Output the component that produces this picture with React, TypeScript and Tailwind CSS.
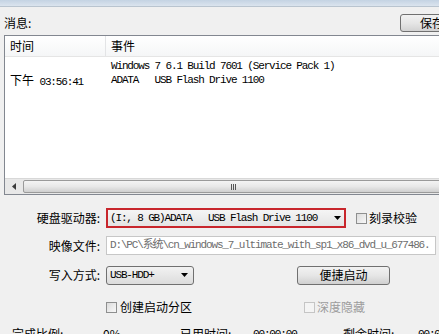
const cn = { fontFamily: '"Noto Sans CJK SC", "Liberation Sans", sans-serif' }
const mono = { fontFamily: '"Liberation Mono", "Noto Sans CJK SC", monospace' }

function Arrow() {
  return (
    <svg width="7" height="4" viewBox="0 0 7 4" className="shrink-0">
      <path d="M0 0h7L3.5 4z" fill="#000" />
    </svg>
  )
}

function Check({ disabled }: { disabled?: boolean }) {
  return (
    <span
      className={
        'inline-block w-[11px] h-[11px] border shrink-0 ' +
        (disabled
          ? 'border-[#c5c5c5] bg-[#f4f4f4]'
          : 'border-[#8e8f8f] bg-gradient-to-br from-[#dcdcdc] to-[#f8f8f8]')
      }
    />
  )
}

export default function App() {
  return (
    <div className="w-[439px] h-[334px] overflow-hidden bg-[#f0f0f0] text-[12px] text-black" style={cn}>
      <div className="w-[520px]">
        {/* title strip */}
        <div className="h-[7px] bg-gradient-to-b from-[#c4d3e3] to-[#dbe4ee] border-b border-[#b9c4cf]" />

        {/* 消息 + 保存 */}
        <div className="flex items-center h-[18px] mt-[7px]">
          <span className="ml-[4px] leading-none">消息:</span>
          <button className="ml-auto mr-[40px] w-[80px] h-[18px] border border-[#707070] rounded-[3px] bg-gradient-to-b from-[#f2f2f2] via-[#e6e6e6] to-[#d2d2d2] text-left pl-[19px] leading-none">
            保存
          </button>
        </div>

        {/* list */}
        <div className="mt-[3px] ml-[4px] h-[160px] border border-[#828790] bg-white flex flex-col">
          <div className="h-[21px] flex border-b border-[#e5e5e5] bg-gradient-to-b from-white to-[#f5f6f7] shrink-0">
            <div className="w-[101px] pl-[5px] flex items-center border-r border-[#e3e4e6]">时间</div>
            <div className="pl-[5px] flex items-center">事件</div>
          </div>
          <div className="flex-1 pt-[2px] text-[11px] tracking-[-1.15px] leading-[14px]" style={mono}>
            <div className="flex">
              <div className="w-[101px]" />
              <div className="pl-[5px] whitespace-pre">Windows 7 6.1 Build 7601 (Service Pack 1)</div>
            </div>
            <div className="flex">
              <div className="w-[101px] pl-[5px] whitespace-pre">
                <span className="text-[12px] tracking-normal" style={cn}>下午</span> 03:56:41
              </div>
              <div className="pl-[5px] whitespace-pre">ADATA   USB Flash Drive 1100</div>
            </div>
          </div>
          {/* horizontal scrollbar */}
          <div className="h-[16px] flex bg-[#e8e8e8] border-t border-[#d8d8d8] shrink-0">
            <div className="w-[18px] flex items-center justify-center">
              <svg width="4" height="7" viewBox="0 0 4 7">
                <path d="M4 0v7L0 3.5z" fill="#3c3c3c" />
              </svg>
            </div>
            <div className="flex-1 my-[1px] border border-[#9a9a9a] rounded-[2px] bg-gradient-to-b from-[#f4f4f4] via-[#e8e8e8] to-[#cfcfcf] flex items-center">
              <div className="ml-[207px] flex gap-[1px]">
                <span className="w-[1px] h-[6px] bg-[#555]" />
                <span className="w-[1px] h-[6px] bg-[#555]" />
                <span className="w-[1px] h-[6px] bg-[#555]" />
              </div>
            </div>
          </div>
        </div>

        {/* form */}
        <div className="mt-[13px] flex flex-col">
          <div className="flex items-center h-[20px] gap-[6px]">
            <div className="w-[100px] text-right">硬盘驱动器:</div>
            <div className="w-[240px] h-[20px] border-2 border-[#c8262c] bg-gradient-to-b from-[#f5f5f5] to-[#e4e4e4] flex items-center pl-[2px] pr-[3px]">
              <span className="flex-1 whitespace-pre text-[11px] tracking-[-1.15px]" style={mono}>(I:, 8 GB)ADATA   USB Flash Drive 1100</span>
              <Arrow />
            </div>
            <div className="flex items-center gap-[2px] ml-[4px]">
              <Check />
              <span>刻录校验</span>
            </div>
          </div>

          <div className="flex items-center h-[19px] gap-[6px] mt-[8px]">
            <div className="w-[100px] text-right">映像文件:</div>
            <div className="w-[330px] h-[19px] border border-[#c7c7c7] bg-white flex items-center pl-[3px] overflow-hidden">
              <span className="whitespace-pre text-[11px] tracking-[-1.15px] text-[#6d6d6d]" style={mono}>
                D:\PC\系统\cn_windows_7_ultimate_with_sp1_x86_dvd_u_677486.
              </span>
            </div>
          </div>

          <div className="flex items-center h-[20px] gap-[6px] mt-[10px]">
            <div className="w-[100px] text-right">写入方式:</div>
            <div className="w-[88px] h-[19px] border border-[#707070] rounded-[3px] bg-gradient-to-b from-[#f2f2f2] to-[#dcdcdc] flex items-center pl-[3px] pr-[5px]">
              <span className="flex-1 text-[11px] tracking-[-1.15px]" style={mono}>USB-HDD+</span>
              <Arrow />
            </div>
            <button className="ml-[97px] w-[93px] h-[19px] border border-[#707070] rounded-[3px] bg-gradient-to-b from-[#f2f2f2] via-[#e6e6e6] to-[#d0d0d0] leading-none">
              便捷启动
            </button>
          </div>

          <div className="flex items-center h-[14px] mt-[15px]">
            <div className="ml-[106px] flex items-center gap-[3px]">
              <Check />
              <span>创建启动分区</span>
            </div>
            <div className="ml-[112px] flex items-center gap-[2px] text-[#9d9d9d]">
              <Check disabled />
              <span>深度隐藏</span>
            </div>
          </div>

          <div className="flex items-center h-[16px] mt-[12px] whitespace-pre">
            <span className="ml-[12px] w-[91px]">完成比例:</span>
            <span className="w-[77px]">0%</span>
            <span className="w-[73px]">已用时间:</span>
            <span className="w-[90px] text-[11px] tracking-[-1.15px]" style={mono}>00:00:00</span>
            <span className="w-[75px]">剩余时间:</span>
            <span className="text-[11px] tracking-[-1.15px]" style={mono}>00:00:00</span>
          </div>
        </div>
      </div>
    </div>
  )
}
